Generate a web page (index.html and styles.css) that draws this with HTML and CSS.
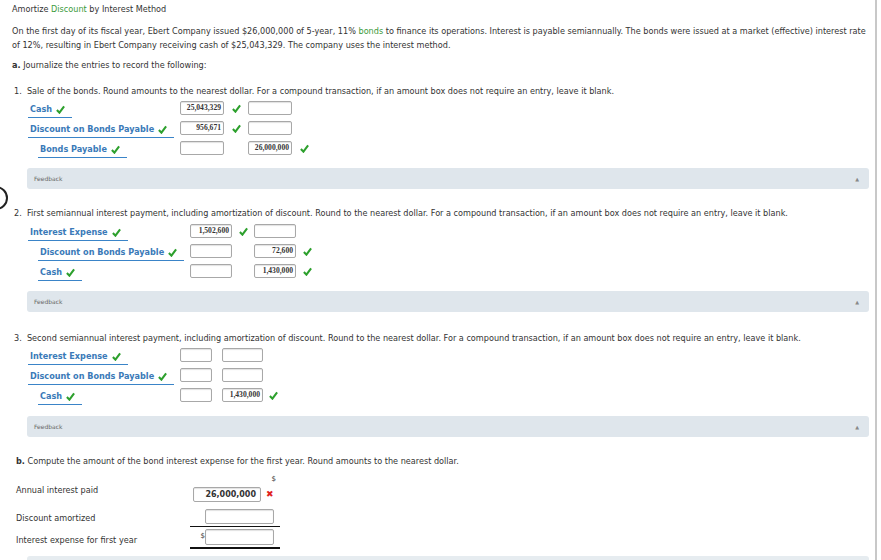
FILE: index.html
```html
<!DOCTYPE html>
<html>
<head>
<meta charset="utf-8">
<link rel="stylesheet" href="styles.css">
</head>
<body>
<div class="page">
  <div class="title">Amortize <span class="term">Discount</span> by Interest Method</div>
  <p class="intro">On the first day of its fiscal year, Ebert Company issued $26,000,000 of 5-year, 11% <span class="term">bonds</span> to finance its operations. Interest is payable semiannually. The bonds were issued at a market (effective) interest rate<br>of 12%, resulting in Ebert Company receiving cash of $25,043,329. The company uses the interest method.</p>
  <div class="part"><b>a.</b> Journalize the entries to record the following:</div>

  <div class="sec s1">
    <div class="q">1.&nbsp; Sale of the bonds. Round amounts to the nearest dollar. For a compound transaction, if an amount box does not require an entry, leave it blank.</div>
    <div class="row">
      <div class="acct"><span class="lbl">Cash <svg class="ck" viewBox="0 0 10 10"><path d="M1 5.5 L3.8 8.5 L9 1.5" /></svg></span></div>
      <div class="inp">25,043,329</div><div class="mk"><svg class="ck" viewBox="0 0 10 10"><path d="M1 5.5 L3.8 8.5 L9 1.5" /></svg></div>
      <div class="inp"></div><div class="mk"></div>
    </div>
    <div class="row">
      <div class="acct"><span class="lbl">Discount on Bonds Payable <svg class="ck" viewBox="0 0 10 10"><path d="M1 5.5 L3.8 8.5 L9 1.5" /></svg></span></div>
      <div class="inp">956,671</div><div class="mk"><svg class="ck" viewBox="0 0 10 10"><path d="M1 5.5 L3.8 8.5 L9 1.5" /></svg></div>
      <div class="inp"></div><div class="mk"></div>
    </div>
    <div class="row">
      <div class="acct cr"><span class="lbl">Bonds Payable <svg class="ck" viewBox="0 0 10 10"><path d="M1 5.5 L3.8 8.5 L9 1.5" /></svg></span></div>
      <div class="inp"></div><div class="mk"></div>
      <div class="inp">26,000,000</div><div class="mk"><svg class="ck" viewBox="0 0 10 10"><path d="M1 5.5 L3.8 8.5 L9 1.5" /></svg></div>
    </div>
    <div class="fb"><span>Feedback</span><span class="tri">&#9650;</span></div>
  </div>

  <div class="sec s2">
    <div class="q">2.&nbsp; First semiannual interest payment, including amortization of discount. Round to the nearest dollar. For a compound transaction, if an amount box does not require an entry, leave it blank.</div>
    <div class="row">
      <div class="acct"><span class="lbl">Interest Expense <svg class="ck" viewBox="0 0 10 10"><path d="M1 5.5 L3.8 8.5 L9 1.5" /></svg></span></div>
      <div class="inp">1,502,600</div><div class="mk"><svg class="ck" viewBox="0 0 10 10"><path d="M1 5.5 L3.8 8.5 L9 1.5" /></svg></div>
      <div class="inp"></div><div class="mk"></div>
    </div>
    <div class="row">
      <div class="acct cr"><span class="lbl">Discount on Bonds Payable <svg class="ck" viewBox="0 0 10 10"><path d="M1 5.5 L3.8 8.5 L9 1.5" /></svg></span></div>
      <div class="inp"></div><div class="mk"></div>
      <div class="inp">72,600</div><div class="mk"><svg class="ck" viewBox="0 0 10 10"><path d="M1 5.5 L3.8 8.5 L9 1.5" /></svg></div>
    </div>
    <div class="row">
      <div class="acct cr"><span class="lbl">Cash <svg class="ck" viewBox="0 0 10 10"><path d="M1 5.5 L3.8 8.5 L9 1.5" /></svg></span></div>
      <div class="inp"></div><div class="mk"></div>
      <div class="inp">1,430,000</div><div class="mk"><svg class="ck" viewBox="0 0 10 10"><path d="M1 5.5 L3.8 8.5 L9 1.5" /></svg></div>
    </div>
    <div class="fb"><span>Feedback</span><span class="tri">&#9650;</span></div>
  </div>

  <div class="sec s3">
    <div class="q">3.&nbsp; Second semiannual interest payment, including amortization of discount. Round to the nearest dollar. For a compound transaction, if an amount box does not require an entry, leave it blank.</div>
    <div class="row">
      <div class="acct"><span class="lbl">Interest Expense <svg class="ck" viewBox="0 0 10 10"><path d="M1 5.5 L3.8 8.5 L9 1.5" /></svg></span></div>
      <div class="inp"></div><div class="mk"></div>
      <div class="inp w2"></div><div class="mk"></div>
    </div>
    <div class="row">
      <div class="acct"><span class="lbl">Discount on Bonds Payable <svg class="ck" viewBox="0 0 10 10"><path d="M1 5.5 L3.8 8.5 L9 1.5" /></svg></span></div>
      <div class="inp"></div><div class="mk"></div>
      <div class="inp w2"></div><div class="mk"></div>
    </div>
    <div class="row">
      <div class="acct cr"><span class="lbl">Cash <svg class="ck" viewBox="0 0 10 10"><path d="M1 5.5 L3.8 8.5 L9 1.5" /></svg></span></div>
      <div class="inp"></div><div class="mk"></div>
      <div class="inp w2">1,430,000</div><div class="mk"><svg class="ck" viewBox="0 0 10 10"><path d="M1 5.5 L3.8 8.5 L9 1.5" /></svg></div>
    </div>
    <div class="fb"><span>Feedback</span><span class="tri">&#9650;</span></div>
  </div>

  <div class="partb">
    <div class="q"><b>b.</b> Compute the amount of the bond interest expense for the first year. Round amounts to the nearest dollar.</div>
    <div class="brow dollar"><div class="blbl"></div><div class="amt"><span class="cur">$</span></div></div>
    <div class="brow r1"><div class="blbl">Annual interest paid</div><div class="amt"><div class="binp">26,000,000</div><span class="x">&#10006;</span></div></div>
    <div class="brow r2"><div class="blbl">Discount amortized</div><div class="amt"><div class="binp"></div></div></div>
    <div class="brow r3"><div class="blbl">Interest expense for first year</div><div class="amt"><span class="cur2">$</span><div class="binp"></div></div></div>
  </div>
  <div class="fb last"></div>
  <div class="ring"></div>
</div>
</body>
</html>
```
FILE: styles.css
```css
html, body { margin: 0; padding: 0; background: #fff; }
body { font-family: "DejaVu Sans", sans-serif; font-size: 8.15px; color: #333; }
.page { position: relative; width: 877px; height: 560px; overflow: hidden; box-sizing: border-box; padding: 2px 6px 0 12px; border-right: 2px solid #c8c8c8; }
.title { line-height: 14px; }
.term { color: #3b9a3b; }
.intro { margin: 8px 0 0 0; line-height: 14px; }
.part { margin-top: 6px; line-height: 14px; }
.q { line-height: 14px; margin-left: 2px; }
.s1 { margin-top: 12px; }
.s2 { margin-top: 17px; }
.s3 { margin-top: 19px; }
.row { display: flex; align-items: center; height: 20px; margin-left: 16px; }
.s1 .q { margin-bottom: 0; }
.s2 .q { margin-bottom: 1px; }
.s3 .q { margin-bottom: 0; }
.acct { width: 152px; flex: none; align-self: stretch; display: flex; align-items: flex-end; }
.s2 .acct { width: 162px; }
.acct.cr { padding-left: 10px; box-sizing: border-box; }
.lbl { display: inline-flex; align-items: center; gap: 4px; font-weight: bold; color: #3a7ab8; border-bottom: 1px solid #3a84c8; padding: 0 7px 3px 2px; line-height: 10px; }
.ck { width: 9px; height: 9px; fill: none; stroke: #2da02d; stroke-width: 2.3; }
.inp { width: 44px; height: 14px; box-sizing: border-box; border: 1px solid #a8a8a8; border-radius: 2px; box-shadow: inset 0 1px 1px rgba(0,0,0,0.12); background: #fff; flex: none; font-family: "Liberation Serif", "Times New Roman", serif; font-size: 7.6px; font-weight: bold; color: #333; text-align: right; padding-right: 2px; line-height: 12px; overflow: hidden; white-space: nowrap; }
.mk { width: 24px; flex: none; display: flex; justify-content: center; }
.s2 .inp { width: 42px; }
.s2 .mk { width: 22px; }
.s3 .inp { width: 32px; }
.s3 .mk { width: 10px; }
.s3 .inp.w2 { width: 41px; }
.s3 .row .mk:last-child { width: 20px; }
.fb { margin: 10px 0 0 15px; height: 21px; background: #dfe6ec; border-radius: 3px; display: flex; align-items: center; justify-content: space-between; padding: 0 10px 0 7px; font-size: 6px; color: #666; }
.s3 .fb { margin-top: 11px; }
.tri { font-size: 5px; color: #888; }
.partb { margin-top: 17px; }
.partb .q { margin-left: 4px; }
.brow { display: flex; margin-left: 4px; }
.blbl { width: 174px; flex: none; }
.amt { width: 90px; flex: none; display: flex; align-items: flex-start; }
.dollar { height: 11px; margin-top: 6px; }
.dollar .amt { justify-content: flex-end; padding-right: 4px; box-sizing: border-box; }
.cur { font-size: 7px; line-height: 10px; }
.r1 { height: 21px; }
.r1 .blbl { line-height: 10px; }
.r1 .binp { margin: 2px 0 0 3px; width: 68px; font-weight: bold; font-size: 8px; color: #333; }
.x { color: #e02020; font-size: 9px; margin: 4px 0 0 5px; font-weight: bold; }
.r2 { height: 21px; }
.r2 .blbl { padding-top: 7px; line-height: 10px; }
.r2 .amt { border-bottom: 1px solid #111; height: 21px; box-sizing: border-box; }
.r3 { height: 22px; }
.r3 .blbl { padding-top: 8px; line-height: 10px; }
.r3 .amt { border-bottom: 2px solid #111; height: 22px; box-sizing: border-box; }
.binp { width: 69px; height: 15px; box-sizing: border-box; border: 1px solid #a8a8a8; border-radius: 2px; box-shadow: inset 0 1px 1px rgba(0,0,0,0.12); margin: 3px 0 0 15px; text-align: right; padding-right: 4px; line-height: 13px; }
.r3 .binp { margin: 2px 0 0 0; height: 16px; }
.cur2 { width: 15px; text-align: right; font-size: 7px; margin-top: 5px; }
.fb.last { margin-top: 7px; background: #e6ecf0; }
.ring { position: absolute; left: -16px; top: 186px; width: 20px; height: 20px; border: 2px solid #222; border-radius: 50%; }
```
